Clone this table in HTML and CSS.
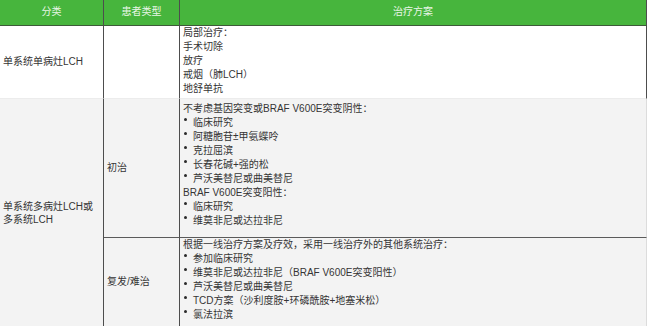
FILE: index.html
```html
<!DOCTYPE html>
<html lang="zh">
<head>
<meta charset="utf-8">
<link rel="stylesheet" href="styles.css">
</head>
<body>
<div class="table">
  <div class="cell head">分类</div>
  <div class="cell head">患者类型</div>
  <div class="cell head last">治疗方案</div>

  <div class="cell r1 mid">单系统单病灶LCH</div>
  <div class="cell r1"></div>
  <div class="cell r1 last dark plan">
    <div>局部治疗：</div>
    <div>手术切除</div>
    <div>放疗</div>
    <div>戒烟（肺LCH）</div>
    <div>地舒单抗</div>
  </div>

  <div class="cell multi mid tight">单系统多病灶LCH或<br>多系统LCH</div>
  <div class="cell r2 mid">初治</div>
  <div class="cell r2 last plan pad">
    <div>不考虑基因突变或BRAF V600E突变阴性：</div>
    <ul class="list">
      <li>临床研究</li>
      <li>阿糖胞苷±甲氨蝶呤</li>
      <li>克拉屈滨</li>
      <li>长春花碱+强的松</li>
      <li>芦沃美替尼或曲美替尼</li>
    </ul>
    <div>BRAF V600E突变阳性：</div>
    <ul class="list">
      <li>临床研究</li>
      <li>维莫非尼或达拉非尼</li>
    </ul>
  </div>

  <div class="cell r3 mid">复发/难治</div>
  <div class="cell r3 last plan">
    <div>根据一线治疗方案及疗效，采用一线治疗外的其他系统治疗：</div>
    <ul class="list">
      <li>参加临床研究</li>
      <li>维莫非尼或达拉非尼（BRAF V600E突变阳性）</li>
      <li>芦沃美替尼或曲美替尼</li>
      <li>TCD方案（沙利度胺+环磷酰胺+地塞米松）</li>
      <li>氯法拉滨</li>
    </ul>
  </div>
</div>
</body>
</html>
```

FILE: styles.css
```css
* { box-sizing: border-box; }
html, body { margin: 0; padding: 0; background: #ffffff; }
body {
  font-family: "Liberation Sans", "Noto Sans CJK SC", sans-serif;
  font-size: 10px;
  color: #353535;
}
.table {
  display: grid;
  grid-template-columns: 104px 76px 467px;
  grid-template-rows: 26px 73px 139px 88px;
  width: 647px;
}
.cell {
  border-right: 1px solid #4d4d4d;
  padding: 0 3px;
  line-height: 14px;
}
.head {
  background: #47b53d;
  color: #e9f5e7;
  border-bottom: 1px solid #3d5a38;
  display: flex;
  align-items: center;
  justify-content: center;
  padding-bottom: 1px;
}
.r1 { background: #ffffff; border-bottom: 1px solid #ececec; }
.r2 { background: #f3f3f3; border-bottom: 1px solid #5a5a5a; }
.r3 { background: #f3f3f3; }
.multi {
  background: #f3f3f3;
  grid-row: span 2;
}
.last.r2, .last.r3 { border-right-color: #dcdcdc; }
.last.dark { border-right-color: #4d4d4d; }
.mid {
  display: flex;
  align-items: center;
}
.tight { line-height: 13px; }
.pad { padding-top: 3px; }
.list {
  list-style: none;
  margin: 0;
  padding: 0;
}
.list li {
  display: flex;
}
.list li::before {
  content: "";
  flex: none;
  width: 3px;
  height: 3px;
  border-radius: 50%;
  background: #2a2a2a;
  margin: 2px 6px 0 1px;
}
```
